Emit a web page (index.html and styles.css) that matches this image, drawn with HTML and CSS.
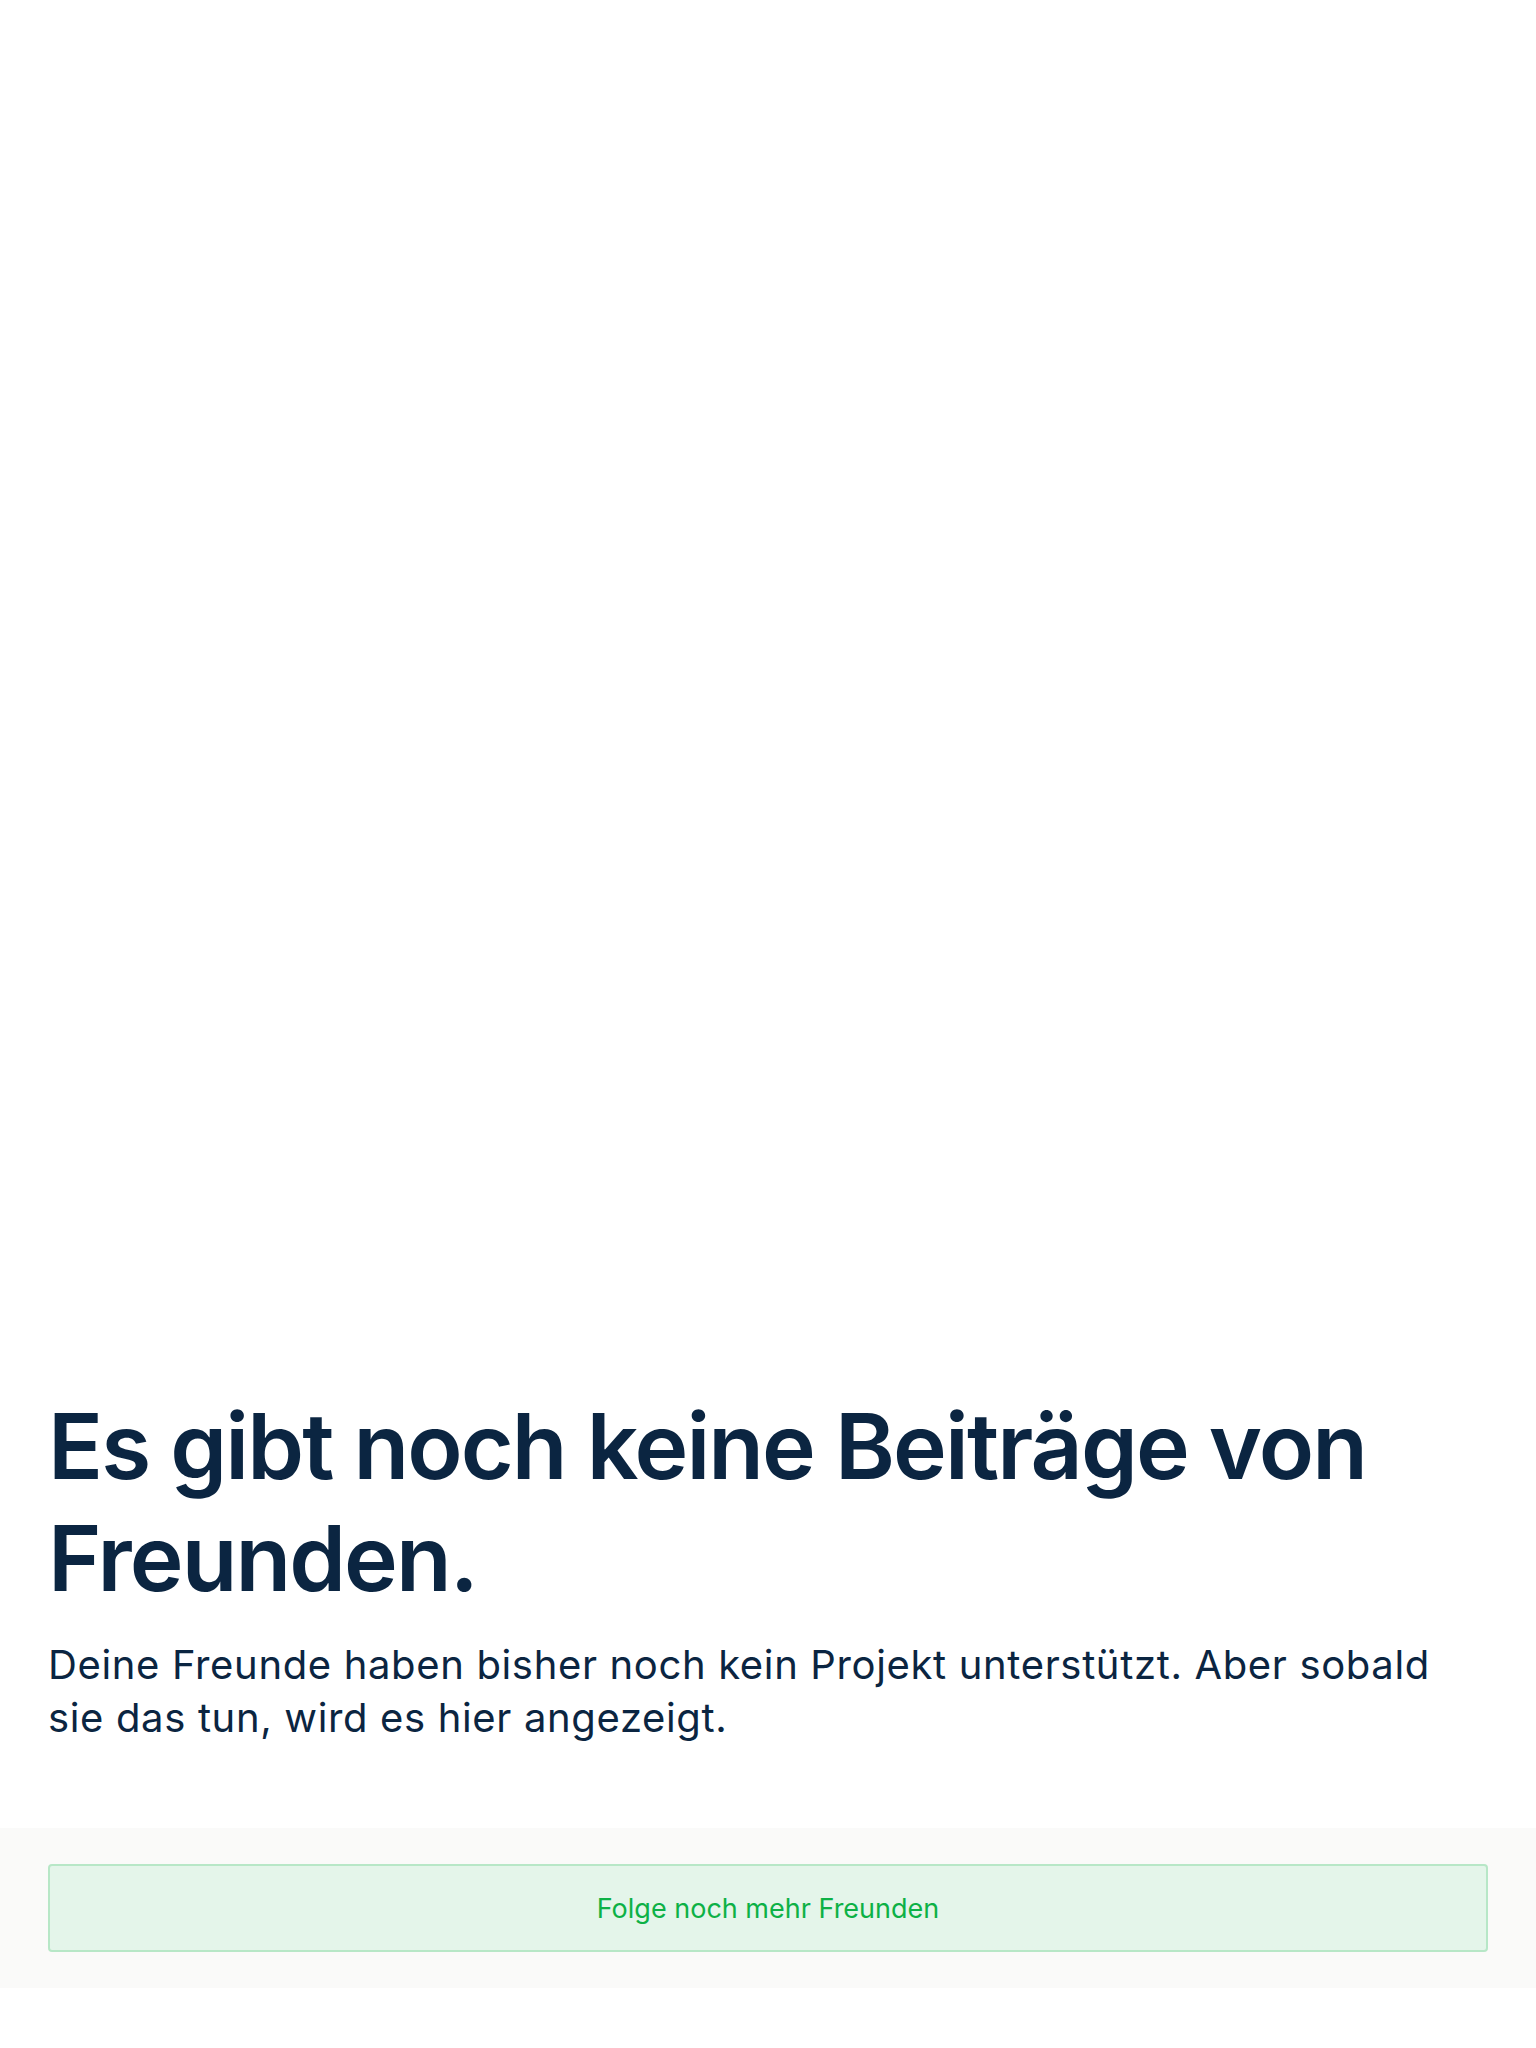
FILE: index.html
```html
<!DOCTYPE html>
<html lang="de">
<head>
<meta charset="utf-8">
<title>Freunde</title>
<link rel="stylesheet" href="styles.css">
</head>
<body>
<div class="page">
  <section class="empty">
    <h1 class="empty-title">Es gibt noch keine Beiträge von Freunden.</h1>
    <p class="empty-text">Deine Freunde haben bisher noch kein Projekt unterstützt. Aber sobald sie das tun, wird es hier angezeigt.</p>
  </section>
  <div class="action-bar">
    <button class="follow-btn" type="button">Folge noch mehr Freunden</button>
  </div>
</div>
</body>
</html>
```

FILE: styles.css
```css
* { box-sizing: border-box; }
html, body { margin: 0; padding: 0; background: #ffffff; }
body { font-family: Inter, "Noto Sans", "Liberation Sans", sans-serif; color: #0b2541; }
.page {
  min-height: 2048px;
  display: flex;
  flex-direction: column;
  justify-content: flex-end;
  padding-bottom: 60px;
}
.empty { padding: 0 48px; }
.empty-title {
  margin: 0;
  font-size: 91px;
  line-height: 112px;
  font-weight: 600;
  letter-spacing: -1.9px;
  color: #0b2541;
}
.empty-text {
  margin: 24px 0 0;
  font-size: 40px;
  line-height: 53px;
  font-weight: 400;
  letter-spacing: 0.65px;
  color: #0b2541;
}
.action-bar {
  margin-top: 84px;
  background: #fafaf9;
  padding: 36px 48px;
}
.follow-btn {
  display: block;
  width: 100%;
  height: 88px;
  border: 2px solid #b7e7c7;
  border-radius: 4px;
  background: #e4f5ea;
  color: #0db146;
  font-family: inherit;
  font-size: 27px;
  font-weight: 400;
}
```
